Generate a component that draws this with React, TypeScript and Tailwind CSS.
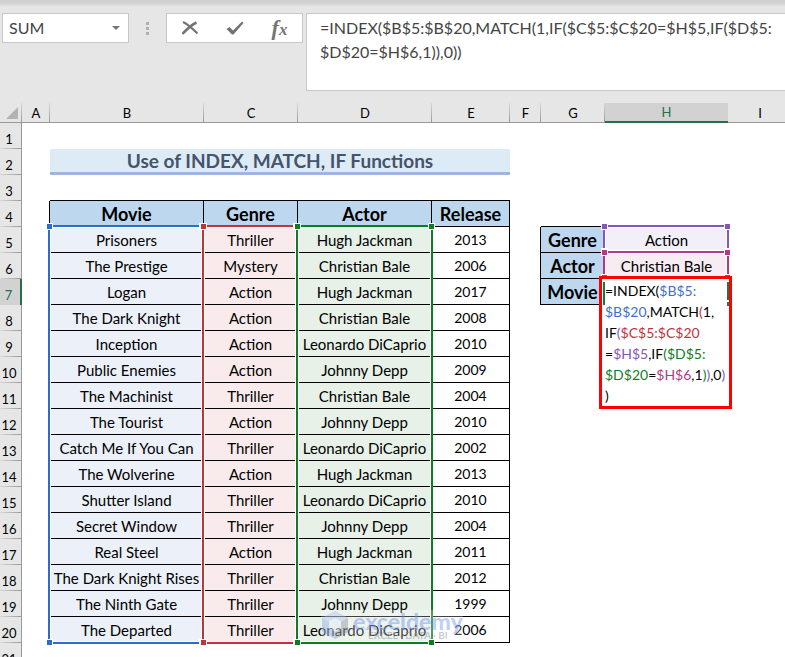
import type { ReactNode } from "react";

const movies: [string, string, string, string][] = [
  ["Prisoners", "Thriller", "Hugh Jackman", "2013"],
  ["The Prestige", "Mystery", "Christian Bale", "2006"],
  ["Logan", "Action", "Hugh Jackman", "2017"],
  ["The Dark Knight", "Action", "Christian Bale", "2008"],
  ["Inception", "Action", "Leonardo DiCaprio", "2010"],
  ["Public Enemies", "Action", "Johnny Depp", "2009"],
  ["The Machinist", "Thriller", "Christian Bale", "2004"],
  ["The Tourist", "Action", "Johnny Depp", "2010"],
  ["Catch Me If You Can", "Thriller", "Leonardo DiCaprio", "2002"],
  ["The Wolverine", "Action", "Hugh Jackman", "2013"],
  ["Shutter Island", "Thriller", "Leonardo DiCaprio", "2010"],
  ["Secret Window", "Thriller", "Johnny Depp", "2004"],
  ["Real Steel", "Action", "Hugh Jackman", "2011"],
  ["The Dark Knight Rises", "Thriller", "Christian Bale", "2012"],
  ["The Ninth Gate", "Thriller", "Johnny Depp", "1999"],
  ["The Departed", "Thriller", "Leonardo DiCaprio", "2006"],
];

const columns = ["A", "B", "C", "D", "E", "F", "G", "H", "I"];
const line = "border-r border-b border-black";
const head = `${line} bg-[#bdd7ee] text-[18px] font-bold`;

function ColumnHeads() {
  return (
    <tr className="h-5 bg-[#e6e6e6]">
      <th className="border-b border-[#999] bg-[linear-gradient(to_bottom,#d8d8d8,#999)] bg-[length:1px_100%] bg-right bg-no-repeat p-0">
        <button aria-label="Select all" className="flex h-[19px] w-full items-center justify-center">
          <svg viewBox="0 0 12 12" className="ml-[2px] size-3 fill-[#b3b3b3]">
            <path d="M12 0V12H0Z" />
          </svg>
        </button>
      </th>
      {columns.map((c) => (
        <th
          key={c}
          scope="col"
          className={
            c === "H"
              ? "border-b-2 border-[#217346] bg-[#d2d2d2] p-0 text-[13px] leading-[18px] font-normal text-[#217346]"
              : "border-b border-[#999] bg-[linear-gradient(to_bottom,#d8d8d8,#999)] bg-[length:1px_100%] bg-right bg-no-repeat p-0 text-[13px] leading-[18px] font-normal"
          }
        >
          {c}
        </th>
      ))}
    </tr>
  );
}

function Row({ n, children }: { n: number; children?: ReactNode }) {
  return (
    <tr className="h-[26px]">
      <th
        scope="row"
        className={
          n === 7
            ? "border-r-2 border-[#217346] bg-[#d2d2d2] p-0 pr-[3px] align-bottom text-[13px] leading-5 font-normal text-[#217346]"
            : "border-r border-[#999] bg-[#e6e6e6] bg-[linear-gradient(to_right,#d8d8d8,#999)] bg-[length:100%_1px] bg-bottom bg-no-repeat p-0 pr-[3px] align-bottom text-[13px] leading-5 font-normal"
        }
      >
        {n}
      </th>
      {children}
    </tr>
  );
}

function SideCells({ n }: { n: number }) {
  if (n === 4)
    return (
      <>
        <td />
        <td className="border-b border-black" />
        <td />
        <td />
      </>
    );
  if (n === 5)
    return (
      <>
        <td className="border-r border-black" />
        <td className={head}>Genre</td>
        <td className="bg-[#f2eff8]">Action</td>
        <td />
      </>
    );
  if (n === 6)
    return (
      <>
        <td className="border-r border-black" />
        <td className={head}>Actor</td>
        <td className="bg-[#f8ecf3]">Christian Bale</td>
        <td />
      </>
    );
  if (n === 7)
    return (
      <>
        <td className="border-r border-black" />
        <td className={head}>Movie</td>
        <td />
        <td />
      </>
    );
  return <td colSpan={4} />;
}

function Range({ box, handle }: { box: string; handle: string }) {
  const h = `absolute size-[7px] border border-white ${handle}`;
  return (
    <div className={`pointer-events-none absolute border-2 shadow-[inset_0_0_0_1px_#fff] ${box}`}>
      <span className={`${h} -left-1 -top-1`} />
      <span className={`${h} -right-1 -top-1`} />
      <span className={`${h} -bottom-1 -left-1`} />
      <span className={`${h} -bottom-1 -right-1`} />
    </div>
  );
}

function CellEditor() {
  const blue = "text-[#3f6fcf]";
  const red = "text-[#c0323c]";
  const purple = "text-[#8457b8]";
  const green = "text-[#107c22]";
  const pink = "text-[#b03a84]";
  return (
    <div
      role="textbox"
      aria-label="Cell H7"
      className="absolute left-[599px] top-[173px] w-[133px] border-3 border-[#ff0000] bg-white pt-px pl-[3px] text-[14px] leading-[21px] whitespace-nowrap"
    >
      <span className="absolute left-px top-[3px] h-[23px] w-[2px] bg-[#217346]" />
      <span className="absolute right-0 top-[3px] h-[18px] w-[2px] bg-[#217346]" />
      <span className="absolute right-0 top-[23px] h-1 w-[2px] bg-[#217346]" />
      <div>=INDEX(<span className={blue}>$B$5:</span></div>
      <div><span className={blue}>$B$20</span>,MATCH<span className={red}>(</span>1,</div>
      <div>IF<span className={purple}>(</span><span className={red}>$C$5:$C$20</span></div>
      <div>=<span className={purple}>$H$5</span>,IF<span className={green}>($D$5:</span></div>
      <div>
        <span className={green}>$D$20</span>=<span className={pink}>$H$6</span>,1
        <span className={green}>)</span><span className={purple}>)</span>,0<span className={purple}>)</span>
      </div>
      <div>)</div>
    </div>
  );
}

function Watermark() {
  return (
    <div className="pointer-events-none absolute left-[321px] top-[507px] flex items-center gap-1 bg-white/25">
      <svg viewBox="0 0 28 30" className="h-[30px] w-7 opacity-40">
        <path d="M14 1 27 8V22L14 29 1 22V8Z" fill="#7f9fe0" />
        <path d="M14 1 27 8 14 15 1 8Z" fill="#a9bff0" />
        <path d="M14 15 27 8V22L14 29Z" fill="#7e8794" />
        <path d="M8 11 14 8 20 11V19L14 22 8 19Z" fill="#dfe8fa" />
      </svg>
      <div className="flex flex-col items-center">
        <span className="text-[23px] leading-5 font-black text-[#6f8ff0]/45">exceldemy</span>
        <span className="text-[10px] leading-[9px] font-bold text-[#7d8796]/45">EXCEL · DATA · BI</span>
      </div>
    </div>
  );
}

function FormulaBar() {
  return (
    <header className="flex items-start bg-[linear-gradient(to_bottom,#cfcfcf,#d2d2d2_3px,#e6e6e6_7px)] pb-3 pl-[2px] pt-[13px] text-[#444]">
      <div className="flex h-[30px] w-[127px] items-center border border-[#c6c6c6] bg-white">
        <input aria-label="Name box" defaultValue="SUM" className="w-full min-w-0 bg-transparent pl-[6px] text-[16px] outline-none" />
        <button aria-label="Name list" className="flex w-6 shrink-0 justify-center">
          <svg viewBox="0 0 8 4" className="h-1 w-2 fill-[#777]">
            <path d="M0 0H8L4 4Z" />
          </svg>
        </button>
      </div>
      <div className="flex h-[30px] w-[37px] flex-col items-center justify-center gap-[2px]">
        <span className="size-[3px] bg-[#b0b0b0]" />
        <span className="size-[3px] bg-[#b0b0b0]" />
        <span className="size-[3px] bg-[#b0b0b0]" />
      </div>
      <div className="grid h-[30px] w-[137px] grid-cols-3 border border-[#c6c6c6] bg-white">
        <button aria-label="Cancel" className="flex items-center justify-center">
          <svg viewBox="0 0 16 14" className="h-[14px] w-4 fill-none stroke-[#747474]">
            <path d="M1 1C5 3 10 7 15.500 12.500" strokeWidth="2" />
            <path d="M.5 13C5 8 9 4 14.500 1.500" strokeWidth="2.600" />
          </svg>
        </button>
        <button aria-label="Enter" className="flex items-center justify-center">
          <svg viewBox="0 0 18 14" className="h-[14px] w-[18px] fill-[#747474]">
            <path d="M.5 8 3.500 6 7 9.500 16 .5 17.500 2 7.500 13.500H6Z" />
          </svg>
        </button>
        <button
          aria-label="Insert function"
          className="flex items-center justify-center font-['Liberation_Serif',serif] text-[22px] leading-5 font-bold text-[#747474] italic"
        >
          f<span className="mt-1 text-[17px]">x</span>
        </button>
      </div>
      <textarea
        aria-label="Formula bar"
        defaultValue={"=INDEX($B$5:$B$20,MATCH(1,IF($C$5:$C$20=$H$5,IF($D$5:\n$D$20=$H$6,1)),0))"}
        className="ml-[3px] block h-[78px] min-w-0 flex-1 resize-none overflow-hidden border border-r-0 border-[#c6c6c6] bg-white py-[2px] pl-[13px] text-[16px] leading-6 whitespace-pre outline-none"
      />
    </header>
  );
}

export default function App() {
  return (
    <div className="h-screen overflow-hidden bg-white font-['Lato',sans-serif] text-black">
      <FormulaBar />
      <main className="relative">
        <table className="w-full min-w-[792px] table-fixed border-separate border-spacing-0 text-center text-[15px] leading-5 whitespace-nowrap [&_td]:p-0">
          <colgroup>
            <col className="w-[22px]" />
            <col className="w-[28px]" />
            <col className="w-[154px]" />
            <col className="w-[94px]" />
            <col className="w-[134px]" />
            <col className="w-[78px]" />
            <col className="w-[31px]" />
            <col className="w-[64px]" />
            <col className="w-[123px]" />
            <col />
          </colgroup>
          <thead>
            <ColumnHeads />
          </thead>
          <tbody>
            <Row n={1}>
              <td colSpan={9} />
            </Row>
            <Row n={2}>
              <td />
              <td colSpan={4} className="border-b-3 border-[#9fb5e1] bg-[#ddebf7] text-[19px] font-bold text-[#44546a]">
                Use of INDEX, MATCH, IF Functions
              </td>
              <td colSpan={4} />
            </Row>
            <Row n={3}>
              <td />
              <td colSpan={4} className="border-b border-black" />
              <td colSpan={4} />
            </Row>
            <Row n={4}>
              <td className="border-r border-black" />
              <td className={head}>Movie</td>
              <td className={head}>Genre</td>
              <td className={head}>Actor</td>
              <td className={head}>Release</td>
              <SideCells n={4} />
            </Row>
            {movies.map(([movie, genre, actor, year], i) => (
              <Row key={movie} n={i + 5}>
                <td className="border-r border-black" />
                <td className={`${line} bg-[#ebf0f9]`}>{movie}</td>
                <td className={`${line} bg-[#f9ebeb]`}>{genre}</td>
                <td className={`${line} bg-[#e7f1e8]`}>{actor}</td>
                <td className={`${line} text-[14px]`}>{year}</td>
                <SideCells n={i + 5} />
              </Row>
            ))}
            <Row n={21}>
              <td colSpan={9} />
            </Row>
          </tbody>
        </table>
        <Range box="left-[48px] top-[122px] h-[419px] w-[156px] border-[#2f6bc9]" handle="bg-[#2f6bc9]" />
        <Range box="left-[202px] top-[122px] h-[419px] w-[96px] border-[#c0323c]" handle="bg-[#c0323c]" />
        <Range box="left-[296px] top-[122px] h-[419px] w-[137px] border-[#107c22]" handle="bg-[#107c22]" />
        <Range box="left-[603px] top-[122px] h-[28px] w-[126px] border-[#8457b8]" handle="bg-[#8457b8]" />
        <Range box="left-[603px] top-[148px] h-[28px] w-[126px] border-[#b03a84]" handle="bg-[#b03a84]" />
        <CellEditor />
        <Watermark />
      </main>
    </div>
  );
}
